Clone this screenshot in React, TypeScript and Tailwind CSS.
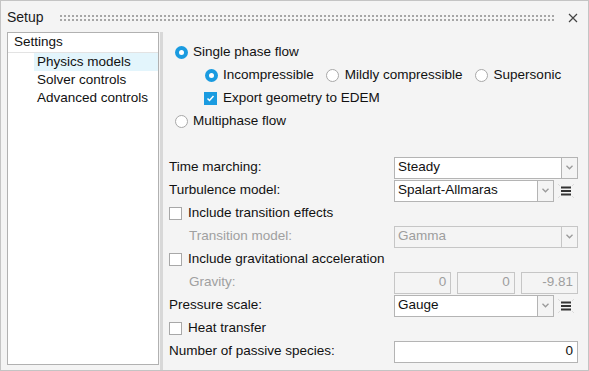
import React from "react";

const font = { fontFamily: '"Liberation Sans", Arial, sans-serif' };

function Radio({ checked }: { checked?: boolean }) {
  return checked ? (
    <span className="w-[13px] h-[13px] rounded-full bg-[#1a9be0] flex items-center justify-center shrink-0">
      <span className="w-[5px] h-[5px] rounded-full bg-white" />
    </span>
  ) : (
    <span className="block w-[13px] h-[13px] rounded-full bg-white border border-[#a8a8a8] shrink-0" />
  );
}

function Checkbox({ checked }: { checked?: boolean }) {
  return checked ? (
    <span className="w-[13px] h-[13px] bg-[#1a9be0] flex items-center justify-center shrink-0">
      <svg width="9" height="9" viewBox="0 0 9 9">
        <polyline points="1.5,4.5 3.5,6.5 7.5,2" fill="none" stroke="white" strokeWidth="1.5" />
      </svg>
    </span>
  ) : (
    <span className="block w-[13px] h-[13px] bg-white border border-[#a8a8a8] shrink-0" />
  );
}

function Chevron() {
  return (
    <svg width="7" height="5" viewBox="0 0 7 5">
      <polyline points="0.5,0.8 3.5,3.8 6.5,0.8" fill="none" stroke="#9a9a9a" strokeWidth="1.3" />
    </svg>
  );
}

function Select({ value, disabled }: { value: string; disabled?: boolean }) {
  return (
    <div className="flex flex-1 h-[22px]">
      <div
        className={`flex-1 flex items-center pl-[3px] border ${
          disabled ? "bg-[#f4f4f4] border-[#c6c6c6] text-[#9e9e9e]" : "bg-white border-[#b4b4b4]"
        }`}
      >
        {value}
      </div>
      <div
        className={`w-[16px] flex items-center justify-center border border-l-0 ${
          disabled ? "border-[#c6c6c6]" : "border-[#b4b4b4]"
        } bg-[#f4f4f4]`}
      >
        <Chevron />
      </div>
    </div>
  );
}

function MenuIcon() {
  return (
    <div className="w-[24px] h-[22px] flex items-center justify-center">
      <svg width="18" height="16" viewBox="0 0 18 16">
        <g stroke="#dcdcdc" strokeWidth="1">
          <line x1="1" y1="1" x2="3" y2="3" />
          <line x1="17" y1="1" x2="15" y2="3" />
          <line x1="1" y1="15" x2="3" y2="13" />
          <line x1="17" y1="15" x2="15" y2="13" />
        </g>
        <g stroke="#333" strokeWidth="2">
          <line x1="4" y1="4.5" x2="14" y2="4.5" />
          <line x1="4" y1="8" x2="14" y2="8" />
          <line x1="4" y1="11.5" x2="14" y2="11.5" />
        </g>
      </svg>
    </div>
  );
}

function Row({ children, className = "" }: { children: React.ReactNode; className?: string }) {
  return <div className={`h-[23px] flex items-center ${className}`}>{children}</div>;
}

function FieldRow({ label, disabled, indent, children }: { label: string; disabled?: boolean; indent?: boolean; children: React.ReactNode }) {
  return (
    <Row>
      <div className={`w-[225px] ${indent ? "pl-[20px]" : ""} ${disabled ? "text-[#a0a0a0]" : ""}`}>{label}</div>
      <div className="flex-1 flex items-center">{children}</div>
    </Row>
  );
}

export default function App() {
  const treeItems = ["Physics models", "Solver controls", "Advanced controls"];

  return (
    <div className="w-[589px] h-[371px] bg-[#f4f4f4] border border-[#c4c4c4] flex flex-col text-[13.5px] text-[#111]" style={font}>
      {/* title bar */}
      <div className="h-[31px] flex items-center pl-[6px] pr-[10px] pt-[2px]">
        <span className="text-[14px] text-[#1a1a1a]">Setup</span>
        <div className="flex-1 h-[8px] ml-[15px] mr-[12px] bg-[radial-gradient(circle,#a6a6a6_0.9px,transparent_1.2px)] bg-[length:4px_4px]" />
        <svg width="10" height="10" viewBox="0 0 10 10">
          <path d="M1 1 L9 9 M9 1 L1 9" stroke="#444" strokeWidth="1.2" />
        </svg>
      </div>

      <div className="flex flex-1 pl-[6px]">
        {/* tree */}
        <div className="w-[152px] h-[333px] bg-white border border-[#b1b1b1] flex flex-col">
          <div className="h-[20px] flex items-center pl-[6px] border-b border-[#e3e3e3]">Settings</div>
          {treeItems.map((t, i) => (
            <div key={t} className="h-[18px] flex pl-[26px]">
              <div className={`flex-1 flex items-center pl-[3px] ${i === 0 ? "bg-[#e3f5fc]" : ""}`}>{t}</div>
            </div>
          ))}
        </div>

        {/* splitter */}
        <div className="w-[3px] ml-[1px] bg-[#d8d8d8]" />

        {/* content */}
        <div className="flex-1 pl-[6px] pr-[10px] pt-[9px]">
          <Row className="pl-[6px] gap-[5px]">
            <Radio checked />
            <span>Single phase flow</span>
          </Row>
          <Row className="pl-[36px]">
            <Radio checked />
            <span className="ml-[5px]">Incompressible</span>
            <span className="ml-[12px]"><Radio /></span>
            <span className="ml-[6px]">Mildly compressible</span>
            <span className="ml-[12px]"><Radio /></span>
            <span className="ml-[6px]">Supersonic</span>
          </Row>
          <Row className="pl-[35px] gap-[6px]">
            <Checkbox checked />
            <span>Export geometry to EDEM</span>
          </Row>
          <Row className="pl-[6px] gap-[5px]">
            <Radio />
            <span>Multiphase flow</span>
          </Row>

          <div className="h-[23px]" />

          <FieldRow label="Time marching:">
            <Select value="Steady" />
          </FieldRow>
          <FieldRow label="Turbulence model:">
            <Select value="Spalart-Allmaras" />
            <MenuIcon />
          </FieldRow>
          <Row className="gap-[6px]">
            <Checkbox />
            <span>Include transition effects</span>
          </Row>
          <FieldRow label="Transition model:" disabled indent>
            <Select value="Gamma" disabled />
          </FieldRow>
          <Row className="gap-[6px]">
            <Checkbox />
            <span>Include gravitational acceleration</span>
          </Row>
          <FieldRow label="Gravity:" disabled indent>
            <div className="flex-1 grid grid-cols-3 gap-[6px] text-[#9e9e9e]">
              {["0", "0", "-9.81"].map((v, i) => (
                <div key={i} className="h-[22px] border border-[#c6c6c6] flex items-center justify-end pr-[4px]">{v}</div>
              ))}
            </div>
          </FieldRow>
          <FieldRow label="Pressure scale:">
            <Select value="Gauge" />
            <MenuIcon />
          </FieldRow>
          <Row className="gap-[6px]">
            <Checkbox />
            <span>Heat transfer</span>
          </Row>
          <FieldRow label="Number of passive species:">
            <div className="flex-1 h-[22px] bg-white border border-[#b4b4b4] flex items-center justify-end pr-[4px]">0</div>
          </FieldRow>
        </div>
      </div>
    </div>
  );
}
